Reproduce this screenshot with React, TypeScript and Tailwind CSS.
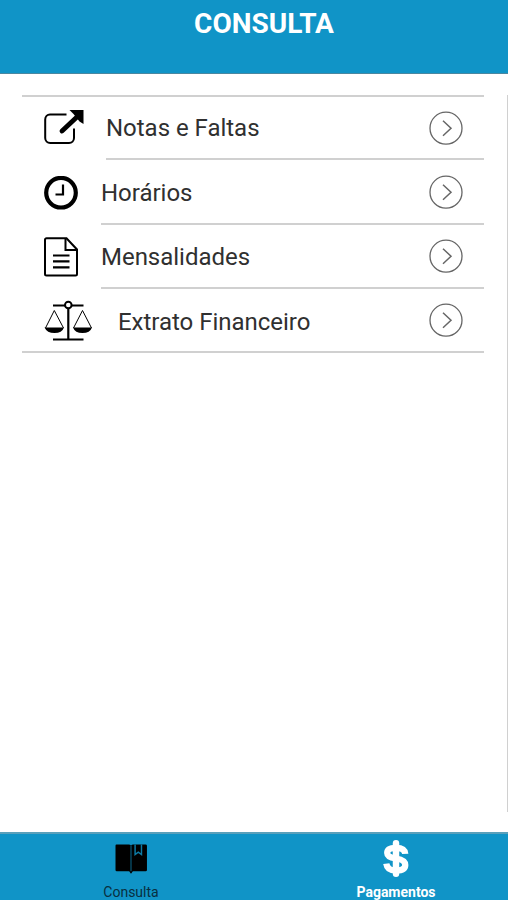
import type { ReactNode } from "react"

interface MenuItem {
  key: string
  label: string
  icon: ReactNode
  rowClass: string
  bodyClass: string
  labelClass: string
}

const ShareIcon = () => (
  <svg width="42" height="38" viewBox="0 0 42 38" fill="none">
    <path d="M22.500 4.500H6A5 5 0 0 0 1.200 9.500V28a5 5 0 0 0 5 5H25a5 5 0 0 0 5-5V18.500" stroke="#000" strokeWidth="2" />
    <path d="M18 21L34 6" stroke="#000" strokeWidth="4.800" strokeLinecap="round" />
    <path d="M25.500 0H39.500V14L35.500 11.500L29.500 4Z" fill="#000" />
  </svg>
)

const ClockIcon = () => (
  <svg width="34" height="34" viewBox="0 0 34 34" fill="none" stroke="#000">
    <circle cx="17" cy="16.700" r="14.800" strokeWidth="4.200" />
    <path d="M19 8.500V18.500H11.500" strokeWidth="2.200" />
  </svg>
)

const DocumentIcon = () => (
  <svg width="34" height="40" viewBox="0 0 34 40" fill="none" stroke="#000" strokeWidth="2">
    <path d="M2.500 1.300H22.500L33 12.500V37a1.500 1.500 0 0 1-1.500 1.500H2.500A1.500 1.500 0 0 1 1 37V2.800A1.500 1.500 0 0 1 2.500 1.300Z" />
    <path d="M21.500 1.500V13H33" />
    <path d="M9 18.500H25.500M9 24.300H25.500M9 30.300H25.500" strokeWidth="2.200" />
  </svg>
)

const ScaleIcon = () => (
  <svg width="49" height="42" viewBox="0 0 49 42" fill="none" stroke="#000">
    <path d="M9 6.500H21M27 6.500H39.500M9 40.500H39.500" strokeWidth="2.200" />
    <path d="M24.300 10V40" strokeWidth="2.200" />
    <circle cx="24.300" cy="6" r="3.300" strokeWidth="2" />
    <path d="M1.500 29L10.300 11.500L19.500 29M29.500 29L38.500 11.500L47.500 29" strokeWidth="1" />
    <path d="M0.500 28.500H20Q18 34 10.500 34Q3 34 0.500 28.500ZM29 28.500H48Q46 34 38.500 34Q31 34 29 28.500Z" fill="#000" stroke="none" />
  </svg>
)

const ChevronIcon = () => (
  <svg className="shrink-0" width="34" height="34" viewBox="0 0 34 34" fill="none" stroke="#666">
    <circle cx="17" cy="17.200" r="16" strokeWidth="1.300" />
    <path d="M14 9.700L22 17.200L14 24.700" strokeWidth="1.500" />
  </svg>
)

const BookIcon = () => (
  <svg width="36" height="34" viewBox="0 0 36 34">
    <path d="M2 0.500H15.500Q17.500 0.500 18 2Q18.500 0.500 20.500 0.500H34Q35.500 0.500 35.500 2V28.500Q35.500 30 34 30H20L18 32.500L16 30H2.500Q1 30 1 28.500V2Q1 0.500 2 0.500Z" fill="#000" />
    <path d="M18 2V30" stroke="#0a5877" strokeWidth="1.300" />
    <path d="M22.500 0.500V11.500L26 9L29.500 11.500V0.500" fill="none" stroke="#0d7ba5" strokeWidth="1.600" />
  </svg>
)

const DollarIcon = () => (
  <svg width="28" height="40" viewBox="0 0 28 40" fill="none" stroke="#fff">
    <path d="M24 15Q23.500 8.500 14 8.500Q4.500 8.500 4.500 14Q4.500 18.500 14 20Q24 21.500 24 27Q24 33 14 33Q4.500 33 3.500 25.500" strokeWidth="6.800" />
    <path d="M14 3.500V36.500" strokeWidth="7" strokeLinecap="round" />
  </svg>
)

const MENU: MenuItem[] = [
  { key: "grades", label: "Notas e Faltas", icon: <ShareIcon />, rowClass: "h-[63px]", bodyClass: "ml-[20px] border-b-2", labelClass: "" },
  { key: "schedule", label: "Horários", icon: <ClockIcon />, rowClass: "h-[65px]", bodyClass: "ml-[23px] border-b-2", labelClass: "pt-[2px]" },
  { key: "fees", label: "Mensalidades", icon: <DocumentIcon />, rowClass: "h-[64px]", bodyClass: "ml-[23px] border-b-2", labelClass: "pt-[2px]" },
  { key: "statement", label: "Extrato Financeiro", icon: <ScaleIcon />, rowClass: "h-[62px]", bodyClass: "ml-[25px]", labelClass: "pt-[3px]" },
]

export default function App() {
  return (
    <div className="flex h-[900px] w-[508px] flex-col overflow-hidden bg-white font-['Roboto',sans-serif]">
      <header className="flex h-[74px] shrink-0 justify-center border-b border-[#4b87a0] bg-[#1094c7] pt-2 pl-5">
        <h1 className="text-[28px] leading-8 font-bold text-white">CONSULTA</h1>
      </header>

      <main className="flex flex-1 items-start justify-between pt-[21px] pl-[22px]">
        <div className="w-[462px] border-y-2 border-[#d0d0d0]">
          {MENU.map((item) => (
            <div key={item.key} className={`flex pl-[22px] ${item.rowClass}`}>
              <div className="flex shrink-0 items-center">{item.icon}</div>
              <div className={`flex flex-1 items-center justify-between border-[#d0d0d0] pr-[21px] ${item.bodyClass}`}>
                <span className={`text-[24px] leading-8 tracking-[-0.02px] text-[#303030] ${item.labelClass}`}>{item.label}</span>
                <ChevronIcon />
              </div>
            </div>
          ))}
        </div>
        <div className="h-[717px] w-px bg-[#d0d0d0]" />
      </main>

      {/* Bottom tabs */}
      <nav className="flex h-[68px] shrink-0 border-t-2 border-[#5aa0bb] bg-[#1094c7]">
        <div className="flex w-[262px] shrink-0 flex-col items-center pt-[10px]">
          <BookIcon />
          <span className="mt-[9px] text-[14px] leading-4 text-[#082f40]">Consulta</span>
        </div>
        <div className="flex w-[268px] shrink-0 flex-col items-center pt-[6px]">
          <DollarIcon />
          <span className="mt-[7px] text-[14px] leading-4 font-bold text-white">Pagamentos</span>
        </div>
      </nav>
    </div>
  )
}
